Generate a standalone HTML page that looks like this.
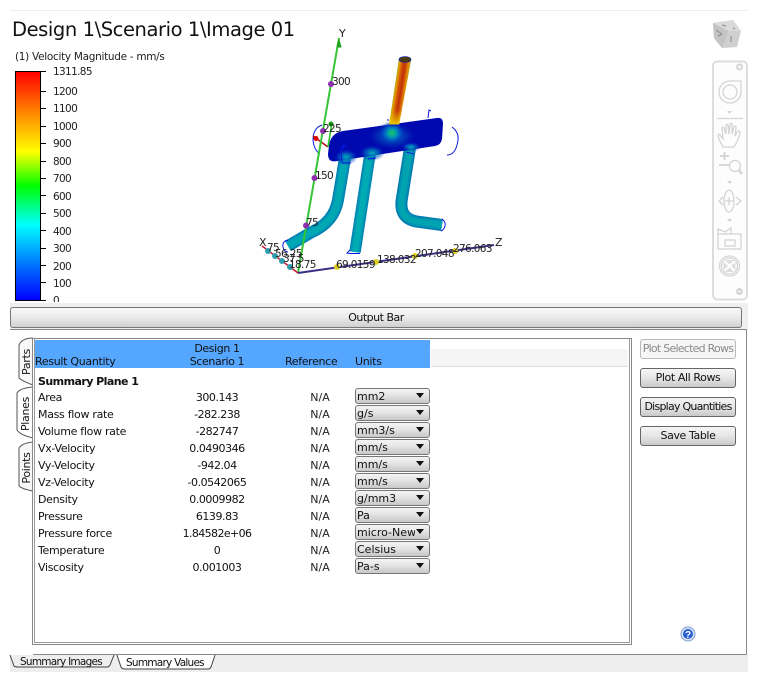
<!DOCTYPE html>
<html><head><meta charset="utf-8"><style>
html,body{margin:0;padding:0;background:#fff}
#p{position:relative;width:758px;height:683px;overflow:hidden;background:#fff;font-family:"DejaVu Sans","Liberation Sans",sans-serif;font-size:11px;color:#111}
#p div{position:absolute;white-space:nowrap;box-sizing:border-box}
.l{left:38px;height:19px;line-height:19px;letter-spacing:-.3px}
.v{left:157px;width:120px;text-align:center;height:19px;line-height:19px;letter-spacing:-.45px}
.n{left:290px;width:60px;text-align:center;height:19px;line-height:19px;color:#222}
.s{left:355px;width:75px;height:16px;border:1.5px solid #777;border-radius:3px;background:linear-gradient(#f4f4f4,#e4e4e4 45%,#c8c8c8);line-height:15px;padding-left:1px;overflow:hidden}
.s:after{content:"";position:absolute;right:5px;top:4px;border:4px solid transparent;border-top:5px solid #111;border-bottom:0}
.s span{display:inline-block;width:58px;overflow:hidden;vertical-align:top}
.b{left:640px;width:96px;height:20px;border:1px solid #666;border-radius:3px;background:linear-gradient(#f5f5f5,#e6e6e6 50%,#c9c9c9);text-align:center;line-height:18px;letter-spacing:-.4px}
.t{left:53px;margin-top:1px;font-size:10.5px;line-height:12px;letter-spacing:-.65px;color:#222}
</style></head><body><div id="p">
<div style="left:10px;top:10px;width:738px;height:1px;background:#eee"></div>
<div style="left:12px;top:16px;font-size:19.5px;line-height:28px;letter-spacing:-.42px;color:#111">Design 1\Scenario 1\Image 01</div>
<div style="left:15px;top:51px;font-size:10.5px;line-height:13px;color:#222;letter-spacing:-.3px">(1) Velocity Magnitude - mm/s</div>
<div style="left:15px;top:71px;width:26px;height:230px;border:1px solid #000;background:linear-gradient(#ff0000,#ff8000 17%,#ffff00 35%,#00ff00 50%,#00ffff 67%,#0080ff 83%,#0000ff)"></div>
<div class="t" style="top:65px">1311.85</div><div class="t" style="top:85px">1200</div><div class="t" style="top:102px">1100</div><div class="t" style="top:120px">1000</div><div class="t" style="top:137px">900</div><div class="t" style="top:155px">800</div><div class="t" style="top:172px">700</div><div class="t" style="top:190px">600</div><div class="t" style="top:207px">500</div><div class="t" style="top:225px">400</div><div class="t" style="top:242px">300</div><div class="t" style="top:260px">200</div><div class="t" style="top:277px">100</div><div class="t" style="top:294px;height:7px;overflow:hidden">0</div>

<svg style="position:absolute;left:0;top:0" width="758" height="683" viewBox="0 0 758 683">
<defs>
<linearGradient id="pg" gradientUnits="userSpaceOnUse" x1="393.500" y1="91" x2="406.500" y2="93"><stop offset="0" stop-color="#60b830"/><stop offset=".12" stop-color="#e8a000"/><stop offset=".35" stop-color="#d05008"/><stop offset=".55" stop-color="#c03008"/><stop offset=".85" stop-color="#e89000"/><stop offset="1" stop-color="#80c040"/></linearGradient>
<linearGradient id="pb" x1="0" y1="0" x2="0" y2="1"><stop offset="0" stop-color="#e8c000" stop-opacity="0"/><stop offset="1" stop-color="#e8d000"/></linearGradient>
<radialGradient id="h1"><stop offset="0" stop-color="#20c050"/><stop offset=".28" stop-color="#00a8a8"/><stop offset=".65" stop-color="#0058c8" stop-opacity=".8"/><stop offset="1" stop-color="#0010b0" stop-opacity="0"/></radialGradient>
<radialGradient id="h2"><stop offset="0" stop-color="#00b0b8"/><stop offset=".5" stop-color="#0070c0" stop-opacity=".7"/><stop offset="1" stop-color="#0020b0" stop-opacity="0"/></radialGradient>
</defs>
<g stroke="#000" stroke-width="1"><path d="M41 71.5H46M41 91.5H46M41 108.5H46M41 126.5H46M41 143.5H46M41 161.5H46M41 178.5H46M41 195.5H46M41 213.5H46M41 230.5H46M41 248.5H46M41 265.5H46M41 282.5H46M41 300.5H46"/></g>
<!-- pipes -->
<g fill="none" stroke-linecap="butt">
<path d="M345 158 L338 200 Q334 222 312 232 L288 246" stroke="#0080b4" stroke-width="12"/>
<path d="M345 158 L338 200 Q334 222 312 232 L288 246" stroke="#0098b4" stroke-width="9"/>
<path d="M345 158 L338 200 Q334 222 312 232 L288 246" stroke="#00a8b4" stroke-width="6"/>
<path d="M370 154 L355 252" stroke="#0084b4" stroke-width="11.500"/>
<path d="M370 154 L355 252" stroke="#009cb4" stroke-width="8.500"/>
<path d="M370 154 L355 252" stroke="#00acb4" stroke-width="5.500"/>
<path d="M410 148 L402 198 Q398 220 420 222 L442 225" stroke="#007cb0" stroke-width="12"/>
<path d="M410 148 L402 198 Q398 220 420 222 L442 225" stroke="#0094b0" stroke-width="9"/>
<path d="M410 148 L402 198 Q398 220 420 222 L442 225" stroke="#00a4b0" stroke-width="6"/>
</g>
<!-- manifold -->
<path d="M343 131 L437 118 Q443 117 443 124 L442 139 Q441 145 435 146 L337 161 Q328 163 328 154 L329 145 Q331 133 343 131Z" fill="#0008b0"/>
<ellipse cx="392" cy="136" rx="24" ry="14" fill="url(#h2)" opacity=".7"/>
<ellipse cx="392" cy="133" rx="13" ry="12" fill="url(#h1)"/>
<ellipse cx="372" cy="153" rx="13" ry="8" fill="url(#h2)"/>
<ellipse cx="346" cy="157" rx="12" ry="8" fill="url(#h2)"/>
<ellipse cx="411" cy="147" rx="10" ry="5" fill="url(#h2)"/>
<!-- top pipe -->
<path d="M399 58 L411 61 L399 125 L389 125Z" fill="url(#pg)"/>
<path d="M391.500 110 L402 110 L399 125 L389 125Z" fill="url(#pb)"/>
<ellipse cx="405" cy="59.500" rx="6" ry="3" fill="#4a3a10" stroke="#0018d0" stroke-width=".6"/>
<path d="M389 125H399" stroke="#0018d0" stroke-width="1"/>
<!-- outlines -->
<g fill="none" stroke="#0818e0" stroke-width="1">
<path d="M322 125 Q313 128 313 140 Q314 150 320 154"/>
<path d="M452 127 Q459 132 458 140 Q456 155 447 155"/>
<path d="M428 118 L429 110 L431 111"/>
<path d="M387 120 L389 120"/>
<path d="M346 145 L341 150 L344 144M341 150 L342 163 L351 163"/>
<path d="M368 159 L376 158M406 152 L414 154"/>
<path d="M288 240 Q282 241 283 247 Q284 252 288 252"/>
<path d="M350 250 L347 253 L350 253.500 L360 253.500"/>
<path d="M442 219 Q446 222 445 226 Q444 230 441 231"/>
</g>
<!-- triad -->
<path d="M313 136 L328 147" stroke="#b01010" stroke-width="1.500"/>
<path d="M328 147 L332 122" stroke="#20c020" stroke-width="1.500"/>
<circle cx="316" cy="138.500" r="2.500" fill="#e00000"/>
<circle cx="331" cy="124" r="2.500" fill="#10a010"/>
<!-- axes -->
<path d="M298 273 L339 38" stroke="#35c535" stroke-width="2"/>
<path d="M339 40 l-2 7 4 0z" fill="#20a020" stroke="#20a020"/>
<path d="M298 273 L262 246" stroke="#d01830" stroke-width="1.500"/>
<path d="M298 273 L494 245" stroke="#3a2f85" stroke-width="2"/>
<g fill="#9030b0"><circle cx="331" cy="84" r="3"/><circle cx="323" cy="131" r="3"/><circle cx="314.500" cy="178" r="3"/><circle cx="306" cy="225.500" r="3"/></g>
<g fill="#30a0b0"><circle cx="268" cy="251" r="3"/><circle cx="275" cy="256" r="3"/><circle cx="282" cy="261" r="3"/><circle cx="290" cy="267" r="3"/></g>
<g fill="#e0d020"><circle cx="337" cy="267" r="3"/><circle cx="376" cy="262" r="3"/><circle cx="415" cy="256" r="3"/><circle cx="455" cy="251" r="3"/></g>
<g font-family="'DejaVu Sans','Liberation Sans',sans-serif" font-size="10.5" fill="#222" letter-spacing="-.65">
<text x="339" y="37" font-size="11">Y</text><text x="332" y="85">300</text><text x="323" y="132">225</text><text x="315" y="179">150</text><text x="306" y="226">75</text>
<text x="259" y="246" font-size="11">X</text><text x="267" y="251">75</text><text x="275" y="257">56.25</text><text x="283" y="262">37.5</text><text x="289" y="268">18.75</text>
<text x="336" y="268">69.0159</text><text x="377" y="263">138.032</text><text x="415" y="257">207.048</text><text x="453" y="252">276.063</text><text x="495" y="246" font-size="11">Z</text>
</g>
<!-- cube -->
<path d="M713 23 L733 20 L741 31 L737 47 L722 48 L714 38Z" fill="#cfcfcf"/>
<path d="M713 23 L728 31 L741 31 L733 20Z" fill="#dadada"/>
<path d="M713 23 L728 31 L722 48 L714 38Z" fill="#c4c4c4"/>
<path d="M716 30l6 4M718 36l4-2M731 36v6M722 25l4 1M733 28l2 1" stroke="#888" stroke-width="1" fill="none"/>
<!-- toolbar -->
<rect x="713" y="61.500" width="34" height="238" rx="4" fill="#fdfdfd" stroke="#ddd" stroke-width="2"/>
<g fill="none" stroke="#d4d4d4" stroke-width="1.300">
<path d="M730 81 H741 V92 A11 11 0 1 1 730 81Z"/>
<circle cx="730" cy="92" r="7"/>
<path d="M717 118.500 H743"/>
<path d="M723 147 Q720 142 718 136 Q718 133 720 135 L723 139 L722 128 Q723 126 724 128 L726 134 L726 125 Q727 123 728 125 L729 134 L730 124 Q731 122 732 124 L732 134 L734 127 Q736 125 736 128 L735 136 L738 131 Q740 131 740 133 Q738 141 734 147 Z"/>
<path d="M724.500 152V160M720 156H729M719 165H729" stroke-width="1.800"/>
<circle cx="735" cy="166" r="5.500"/>
<path d="M739 170L742 174" stroke-width="2.500"/>
<ellipse cx="729" cy="201" rx="5" ry="11"/>
<path d="M723 197 L719 201 L723 205M736 197 L741 201 L736 205M725 201H734M729 197V205"/>
<path d="M718 234 V229 L725 232 L731 228 V234"/>
<rect x="718" y="234" width="23" height="15"/>
<rect x="725" y="240" width="10" height="6"/>
<circle cx="729.500" cy="266" r="10"/><circle cx="729.500" cy="266" r="8"/>
</g>
<path d="M725 260H734L729.500 264.500ZM725 272H734L729.500 267.500ZM723.500 262V270L728 266ZM735.500 262V270L731 266Z" fill="#ddd"/>
<g fill="#d4d4d4"><path d="M727 111h5l-2.500 3zM727 181h5l-2.500 3zM727 219h5l-2.500 3z"/><circle cx="739.500" cy="67" r="3.500"/><circle cx="739.500" cy="291.500" r="3.500"/></g>
<path d="M738 65.500l3 3M741 65.500l-3 3M737.500 291.500h4" stroke="#fff"/>
<!-- help -->
<circle cx="688" cy="634" r="7" fill="#dbe6f8" stroke="#7f9ad0"/>
<circle cx="688" cy="634" r="5" fill="#2a5fd0"/>
<text x="688" y="638" text-anchor="middle" font-size="10" font-weight="bold" fill="#fff" font-family="'Liberation Sans',sans-serif">?</text>
</svg>

<!-- output bar -->
<div style="left:10px;top:303px;width:738px;height:27px;background:#efefef"></div>
<div style="left:10px;top:307px;width:732px;height:21px;border:1px solid #777;border-radius:3px;background:linear-gradient(#f8f8f8,#ececec 45%,#d0d0d0);text-align:center;line-height:20px;letter-spacing:-.5px">Output Bar</div>
<div style="left:10px;top:329px;width:737px;height:1px;background:#888"></div>
<!-- side tabs -->
<svg style="position:absolute;left:0;top:0" width="40" height="500" viewBox="0 0 40 500">
<path d="M33 338 Q22 338 19 345 V378 Q22 381 33 385" fill="#f8f8f8" stroke="#555"/>
<path d="M33 387 Q20 388 17 393 V430 Q20 435 33 438 V387Z" fill="#fff" stroke="#555"/>
<path d="M33 442 Q22 443 19 448 V486 Q22 489 33 491" fill="#f8f8f8" stroke="#555"/>
<g font-family="'DejaVu Sans','Liberation Sans',sans-serif" font-size="11" fill="#111" text-anchor="middle" letter-spacing="-.3">
<text transform="translate(30,362) rotate(-90)">Parts</text>
<text transform="translate(29,414) rotate(-90)">Planes</text>
<text transform="translate(30,468) rotate(-90)">Points</text>
</g>
</svg>
<!-- panel -->
<div style="left:33px;top:329px;width:714px;height:326px;border-right:1.500px solid #888;border-bottom:1.500px solid #888"></div>
<div style="left:32px;top:338px;width:600px;height:307px;border:1px solid #888;background:#fff"></div>
<div style="left:34px;top:339px;width:596px;height:304px;border:1px solid #999;border-top:0;background:#fff"></div>
<div style="left:431px;top:349px;width:197px;height:18px;background:#f5f5f5;border-bottom:1px solid #ddd"></div>
<div style="left:35px;top:340px;width:395px;height:28px;background:#55a6ff"></div>
<div style="left:35px;top:354px;height:14px;line-height:15px;letter-spacing:-.3px">Result Quantity</div>
<div style="left:157px;top:342px;width:120px;text-align:center;line-height:13px;letter-spacing:-.4px">Design 1<br>Scenario 1</div>
<div style="left:285px;top:354px;line-height:15px;letter-spacing:-.35px">Reference</div>
<div style="left:355px;top:354px;line-height:15px;letter-spacing:-.3px">Units</div>
<div class="l" style="top:372px;font-weight:bold;letter-spacing:-.55px">Summary Plane 1</div>

<div class="l" style="top:388px">Area</div><div class="v" style="top:388px">300.143</div><div class="n" style="top:388px">N/A</div><div class="s" style="top:388px">mm2</div>
<div class="l" style="top:405px">Mass flow rate</div><div class="v" style="top:405px">-282.238</div><div class="n" style="top:405px">N/A</div><div class="s" style="top:405px">g/s</div>
<div class="l" style="top:422px">Volume flow rate</div><div class="v" style="top:422px">-282747</div><div class="n" style="top:422px">N/A</div><div class="s" style="top:422px">mm3/s</div>
<div class="l" style="top:439px">Vx-Velocity</div><div class="v" style="top:439px">0.0490346</div><div class="n" style="top:439px">N/A</div><div class="s" style="top:439px">mm/s</div>
<div class="l" style="top:456px">Vy-Velocity</div><div class="v" style="top:456px">-942.04</div><div class="n" style="top:456px">N/A</div><div class="s" style="top:456px">mm/s</div>
<div class="l" style="top:473px">Vz-Velocity</div><div class="v" style="top:473px">-0.0542065</div><div class="n" style="top:473px">N/A</div><div class="s" style="top:473px">mm/s</div>
<div class="l" style="top:490px">Density</div><div class="v" style="top:490px">0.0009982</div><div class="n" style="top:490px">N/A</div><div class="s" style="top:490px">g/mm3</div>
<div class="l" style="top:507px">Pressure</div><div class="v" style="top:507px">6139.83</div><div class="n" style="top:507px">N/A</div><div class="s" style="top:507px">Pa</div>
<div class="l" style="top:524px">Pressure force</div><div class="v" style="top:524px;letter-spacing:-.6px">1.84582e+06</div><div class="n" style="top:524px">N/A</div><div class="s" style="top:524px"><span>micro-Newton</span></div>
<div class="l" style="top:541px">Temperature</div><div class="v" style="top:541px">0</div><div class="n" style="top:541px">N/A</div><div class="s" style="top:541px">Celsius</div>
<div class="l" style="top:558px">Viscosity</div><div class="v" style="top:558px">0.001003</div><div class="n" style="top:558px">N/A</div><div class="s" style="top:558px">Pa-s</div>

<div class="b" style="top:339px;border-color:#bbb;color:#8a8a8a;background:#f6f6f6;letter-spacing:-.75px">Plot Selected Rows</div>
<div class="b" style="top:368px">Plot All Rows</div>
<div class="b" style="top:397px;letter-spacing:-.75px">Display Quantities</div>
<div class="b" style="top:426px">Save Table</div>

<!-- bottom tabs -->
<div style="left:10px;top:655px;width:738px;height:17px;background:#eee"></div>
<svg style="position:absolute;left:0;top:650px" width="240" height="24" viewBox="0 0 240 24">
<path d="M10 5 L14 16 Q15 17 18 17 H107 Q109 17 110 15 L114 5" fill="#eee" stroke="#444"/>
<path d="M117 5 L121 17 Q122 19 125 19 H208 Q210 19 211 17 L215 5" fill="#fff" stroke="#444"/>
<g font-family="'DejaVu Sans','Liberation Sans',sans-serif" font-size="10.5" fill="#111" letter-spacing="-.75">
<text x="20" y="15">Summary Images</text><text x="126" y="16">Summary Values</text>
</g>
</svg>
</div></body></html>
